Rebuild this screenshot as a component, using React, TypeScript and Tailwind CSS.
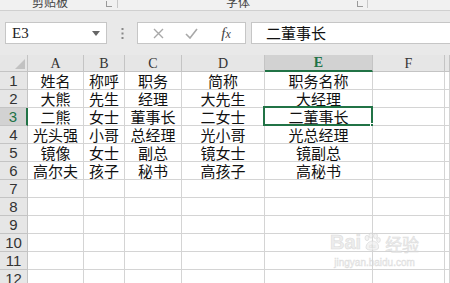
import React from "react";

const cols = ["A", "B", "C", "D", "E", "F", ""];
const data: string[][] = [
  ["姓名", "称呼", "职务", "简称", "职务名称"],
  ["大熊", "先生", "经理", "大先生", "大经理"],
  ["二熊", "女士", "董事长", "二女士", "二董事长"],
  ["光头强", "小哥", "总经理", "光小哥", "光总经理"],
  ["镜像", "女士", "副总", "镜女士", "镜副总"],
  ["高尔夫", "孩子", "秘书", "高孩子", "高秘书"],
];

const cjk = { fontFamily: '"Noto Sans CJK SC", "Noto Sans", sans-serif' };
const serif = { fontFamily: '"Liberation Serif", "DejaVu Serif", serif' };
const sans = { fontFamily: '"Liberation Sans", Arial, sans-serif' };

export default function App() {
  const rows = Array.from({ length: 12 }, (_, i) => i + 1);
  return (
    <div className="relative w-[450px] h-[283px] overflow-hidden bg-[#e9e9e9]">
      {/* ribbon strip */}
      <div className="relative h-[11px] bg-[#f1f1f1] border-b border-[#d0d0d0] overflow-hidden">
        <div className="absolute left-[32px] bottom-[2px] text-[12px] leading-none text-[#444]" style={cjk}>
          剪贴板
        </div>
        <div className="absolute left-[106px] top-[1px] w-[6px] h-[6px] border-l border-b border-[#999]" />
        <div className="absolute left-[117px] top-0 w-px h-[8px] bg-[#c8c8c8]" />
        <div className="absolute left-[226px] bottom-[2px] text-[12px] leading-none text-[#444]" style={cjk}>
          字体
        </div>
        <div className="absolute left-[357px] top-[1px] w-[6px] h-[6px] border-l border-b border-[#999]" />
        <div className="absolute left-[367px] top-0 w-px h-[8px] bg-[#c8c8c8]" />
      </div>

      {/* formula bar */}
      <div className="flex items-center h-[44px]">
        <div className="ml-[5px] w-[102px] h-[22px] bg-white border border-[#c6c6c6] flex items-center justify-between pl-[6px] pr-[6px]">
          <span className="text-[15px] text-[#222]" style={serif}>E3</span>
          <svg width="8" height="5" viewBox="0 0 8 5">
            <path d="M0 0 L8 0 L4 5 Z" fill="#666" />
          </svg>
        </div>
        <div className="w-[30px] flex justify-center">
          <svg width="3" height="11" viewBox="0 0 3 11">
            <rect x="0.5" y="0" width="2" height="2" fill="#888" />
            <rect x="0.5" y="4.5" width="2" height="2" fill="#888" />
            <rect x="0.5" y="9" width="2" height="2" fill="#888" />
          </svg>
        </div>
        <div className="w-[109px] h-[22px] bg-white border border-[#c6c6c6] flex items-center">
          <div className="w-[40px] flex justify-center">
            <svg width="11" height="11" viewBox="0 0 11 11">
              <path d="M1 1 L10 10 M10 1 L1 10" stroke="#a8a8a8" strokeWidth="1.4" />
            </svg>
          </div>
          <div className="w-[26px] flex justify-center">
            <svg width="13" height="11" viewBox="0 0 13 11">
              <path d="M1 6 L5 10 L12 1" stroke="#a8a8a8" strokeWidth="1.6" fill="none" />
            </svg>
          </div>
          <div className="w-[40px] flex justify-center pl-[4px]">
            <span className="italic text-[15px] leading-none text-[#444]" style={serif}>
              f<span className="text-[12px]">x</span>
            </span>
          </div>
        </div>
        <div className="ml-[5px] flex-1 h-[22px] bg-white border border-[#c6c6c6] border-r-0 flex items-center pl-[14px]">
          <span className="text-[15px] leading-[18px] text-[#111]" style={cjk}>二董事长</span>
        </div>
      </div>

      {/* sheet grid */}
      <div className="grid grid-cols-[28px_56px_41px_57px_83px_108px_72px_5px] grid-rows-[17px_repeat(12,18px)]">
        {/* header row */}
        <div className="relative bg-[#e6e6e6] border-r border-b border-[#c4c4c4]">
          <svg className="absolute right-[2px] bottom-[2px]" width="10" height="10" viewBox="0 0 10 10">
            <path d="M10 0 L10 10 L0 10 Z" fill="#c2c2c2" />
          </svg>
        </div>
        {cols.map((c, i) => {
          const sel = c === "E";
          return (
            <div
              key={"h" + i}
              className={
                sel
                  ? "flex items-center justify-center bg-[#d2d2d2] border-r border-[#c4c4c4] border-b-2 border-b-[#217346] text-[#217346] font-bold text-[14px] leading-[15px]"
                  : "flex items-center justify-center bg-[#e6e6e6] border-r border-b border-[#c4c4c4] text-[#333] text-[14px] leading-[15px]"
              }
              style={serif}
            >
              {c}
            </div>
          );
        })}
        {rows.map((r) => {
          const d = data[r - 1];
          const selRow = r === 3;
          return (
            <React.Fragment key={r}>
              <div
                className={
                  selRow
                    ? "flex items-center justify-center bg-[#d2d2d2] border-b border-[#c4c4c4] border-r-2 border-r-[#217346] text-[#217346] text-[15px] leading-[16px]"
                    : "flex items-center justify-center bg-[#e6e6e6] border-r border-b border-[#c4c4c4] text-[#333] text-[15px] leading-[16px]"
                }
                style={sans}
              >
                {r}
              </div>
              {cols.map((_, ci) => {
                const txt = d && ci < 5 ? d[ci] : "";
                const sel = selRow && ci === 4;
                return (
                  <div
                    key={ci}
                    className="relative bg-white border-r border-b border-[#d4d4d4] flex items-center justify-center overflow-visible"
                  >
                    {txt && (
                      <span className="text-[15px] leading-[16px] text-[#111] whitespace-nowrap" style={cjk}>
                        {txt}
                      </span>
                    )}
                    {sel && (
                      <>
                        <div className="absolute left-[-2px] top-[-2px] right-[-1px] bottom-[-1px] border-2 border-[#217346]" />
                        <div className="absolute right-[-4px] bottom-[-4px] w-[6px] h-[6px] bg-[#217346] border border-white" />
                      </>
                    )}
                  </div>
                );
              })}
            </React.Fragment>
          );
        })}
      </div>

      {/* watermark */}
      <div className="absolute left-[330px] top-[232px] flex flex-col items-center pointer-events-none opacity-70">
        <div className="flex items-end gap-[1px] text-[#e6e6e6]">
          <span className="text-[20px] font-bold leading-none" style={{ ...sans, WebkitTextStroke: "0.6px #cfcfcf" }}>Bai</span>
          <svg width="20" height="20" viewBox="0 0 20 20">
            <g fill="#eeeeee" stroke="#cfcfcf" strokeWidth="0.8">
              <ellipse cx="5" cy="6" rx="2" ry="2.6" />
              <ellipse cx="9" cy="3.5" rx="2" ry="2.6" />
              <ellipse cx="13.5" cy="4" rx="2" ry="2.6" />
              <ellipse cx="16.5" cy="8" rx="1.8" ry="2.4" />
              <path d="M4 16 C4 11 8 9 10.5 9 C13 9 17 11 16.5 16 C16 19 5 19 4 16 Z" />
            </g>
            <text x="10.3" y="16" fontSize="6" textAnchor="middle" fill="#cfcfcf" fontFamily="Liberation Sans">du</text>
          </svg>
          <span className="text-[17px] leading-none ml-[2px]" style={{ ...cjk, WebkitTextStroke: "0.5px #cfcfcf" }}>经验</span>
        </div>
        <div className="text-[10px] leading-none mt-[6px] text-[#e6e6e6]" style={{ ...sans, WebkitTextStroke: "0.4px #cfcfcf" }}>
          jingyan.baidu.com
        </div>
      </div>
    </div>
  );
}
